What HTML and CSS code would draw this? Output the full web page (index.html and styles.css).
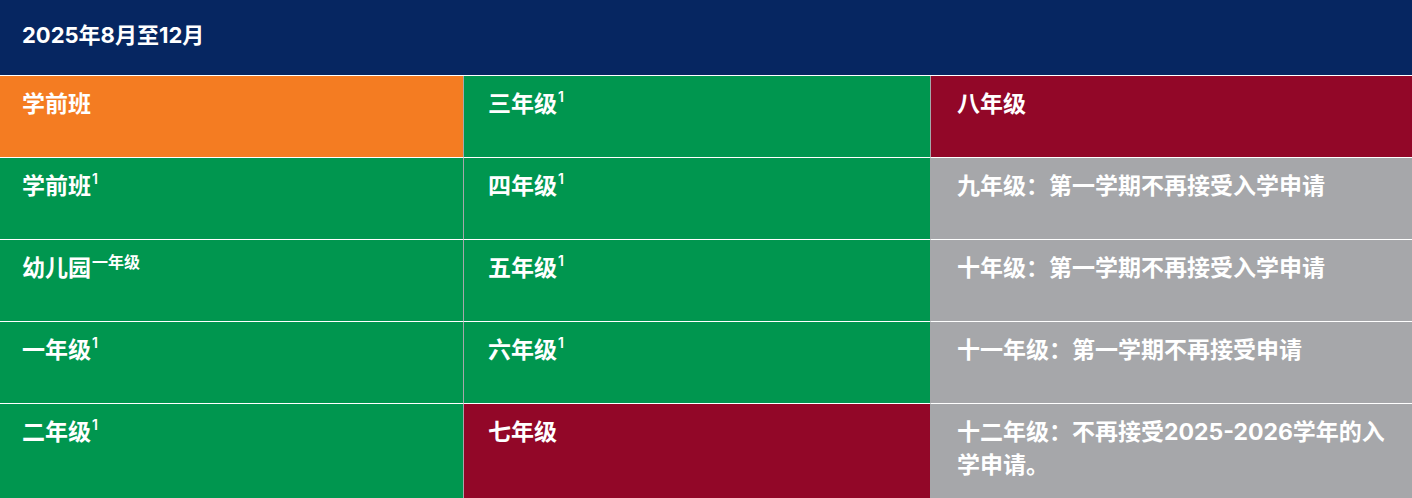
FILE: index.html
```html
<!DOCTYPE html>
<html lang="zh-CN">
<head>
<meta charset="utf-8">
<link rel="stylesheet" href="styles.css">
</head>
<body>
<div class="schedule">
  <div class="head">2025年8月至12月</div>
  <div class="grid">
    <div class="cell orange">学前班</div>
    <div class="cell green mid">三年级<sup>1</sup></div>
    <div class="cell maroon last">八年级</div>

    <div class="cell green">学前班<sup>1</sup></div>
    <div class="cell green mid">四年级<sup>1</sup></div>
    <div class="cell gray last">九年级：第一学期不再接受入学申请</div>

    <div class="cell green">幼儿园<sup class="big">一年级</sup></div>
    <div class="cell green mid">五年级<sup>1</sup></div>
    <div class="cell gray last">十年级：第一学期不再接受入学申请</div>

    <div class="cell green">一年级<sup>1</sup></div>
    <div class="cell green mid">六年级<sup>1</sup></div>
    <div class="cell gray last">十一年级：第一学期不再接受申请</div>

    <div class="cell green tall">二年级<sup>1</sup></div>
    <div class="cell maroon mid tall">七年级</div>
    <div class="cell gray last tall">十二年级：不再接受2025-2026学年的入学申请。</div>
  </div>
</div>
</body>
</html>
```
FILE: styles.css
```css
html, body {
  margin: 0;
  padding: 0;
  background: #ffffff;
}
body {
  font-family: "Inter", "Noto Sans CJK SC", sans-serif;
  font-weight: 700;
  color: #ffffff;
}
.schedule {
  width: 1412px;
}
.head {
  box-sizing: border-box;
  height: 76px;
  background: #062661;
  border-bottom: 1px solid #ffffff;
  padding: 19px 0 0 22px;
  font-size: 22px;
  line-height: 33px;
}
.grid {
  display: grid;
  grid-template-columns: 464px 467px 1fr;
}
.cell {
  box-sizing: border-box;
  height: 82px;
  padding: 12px 26px 0 22px;
  border-bottom: 1px solid #ffffff;
  border-right: 1px solid #a6a7aa;
  font-size: 23px;
  line-height: 33px;
}
.cell.mid {
  padding-left: 24px;
}
.cell.last {
  border-right: none;
  padding-left: 26px;
}
.cell.tall {
  height: 110px;
  border-bottom: none;
}
.orange { background: #f47c22; }
.green { background: #00964f; }
.maroon { background: #920728; }
.gray { background: #a6a7aa; }
sup {
  font-size: 14px;
  line-height: 0;
  vertical-align: 0;
  position: relative;
  top: -10px;
  margin-left: 1px;
  font-weight: 600;
}
sup.big {
  font-size: 16px;
  top: -8px;
}
```
